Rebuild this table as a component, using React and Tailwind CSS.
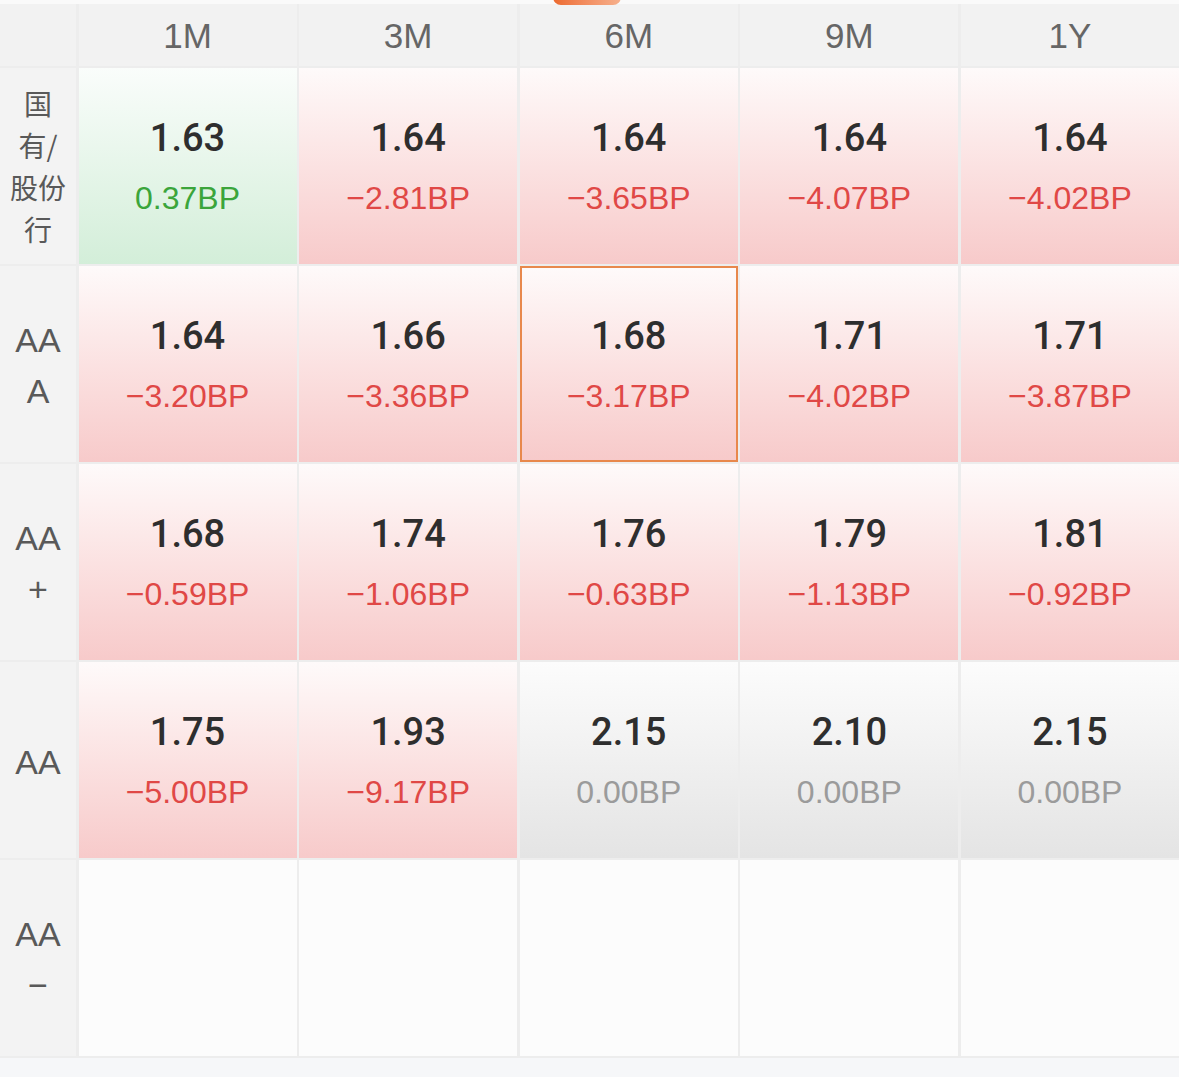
import React from 'react';

const tenors = ['1M', '3M', '6M', '9M', '1Y'];

const rows = [
  {
    label: ['国', '有/', '股份', '行'],
    cjk: true,
    cells: [
      { value: '1.63', change: '0.37BP', tone: 'up' },
      { value: '1.64', change: '−2.81BP', tone: 'down' },
      { value: '1.64', change: '−3.65BP', tone: 'down' },
      { value: '1.64', change: '−4.07BP', tone: 'down' },
      { value: '1.64', change: '−4.02BP', tone: 'down' },
    ],
  },
  {
    label: ['AA', 'A'],
    cells: [
      { value: '1.64', change: '−3.20BP', tone: 'down' },
      { value: '1.66', change: '−3.36BP', tone: 'down' },
      { value: '1.68', change: '−3.17BP', tone: 'down', selected: true },
      { value: '1.71', change: '−4.02BP', tone: 'down' },
      { value: '1.71', change: '−3.87BP', tone: 'down' },
    ],
  },
  {
    label: ['AA', '+'],
    cells: [
      { value: '1.68', change: '−0.59BP', tone: 'down' },
      { value: '1.74', change: '−1.06BP', tone: 'down' },
      { value: '1.76', change: '−0.63BP', tone: 'down' },
      { value: '1.79', change: '−1.13BP', tone: 'down' },
      { value: '1.81', change: '−0.92BP', tone: 'down' },
    ],
  },
  {
    label: ['AA'],
    cells: [
      { value: '1.75', change: '−5.00BP', tone: 'down' },
      { value: '1.93', change: '−9.17BP', tone: 'down' },
      { value: '2.15', change: '0.00BP', tone: 'flat' },
      { value: '2.10', change: '0.00BP', tone: 'flat' },
      { value: '2.15', change: '0.00BP', tone: 'flat' },
    ],
  },
  {
    label: ['AA', '−'],
    cells: [null, null, null, null, null],
  },
];

const toneBg = {
  up: 'bg-linear-to-b from-[#fafdfb] to-[#d3eed9]',
  down: 'bg-linear-to-b from-[#fefafa] to-[#f7caca]',
  flat: 'bg-linear-to-b from-[#fcfcfc] to-[#e4e4e4]',
};

const toneText = {
  up: 'text-[#3ba53b]',
  down: 'text-[#e04846]',
  flat: 'text-[#9b9b9b]',
};

const Cell = ({ cell }) => {
  if (!cell) return <div className="bg-[#fcfcfc]" />;
  return (
    <div
      className={`flex flex-col items-center justify-center pt-[4px] ${toneBg[cell.tone]} ${
        cell.selected ? 'border-[2.5px] border-[#e8884c]' : ''
      }`}
    >
      <div className="font-['Roboto','Liberation_Sans',sans-serif] font-medium text-[38px] leading-[60px] text-[#2e2e2e]">
        {cell.value}
      </div>
      <div className={`text-[32px] leading-[60px] ${toneText[cell.tone]}`}>{cell.change}</div>
    </div>
  );
};

export default function App() {
  return (
    <div className="relative w-[1179px] h-[1077px] overflow-hidden bg-[#f6f7f9] font-['Liberation_Sans','Noto_Sans_CJK_SC',sans-serif]">
      <div className="h-[4px] bg-[#fafafa]" />
      <div className="absolute left-[553px] -top-[6px] w-[68px] h-[11px] rounded-b-[8px] bg-linear-to-r from-[#ec6a2e] to-[#f6b08c]" />

      <div className="grid grid-cols-[76px_repeat(5,1fr)] grid-rows-[62px_repeat(5,196px)] gap-x-[2.5px] gap-y-[2px] bg-[#ededed] pb-[2px]">
        <div className="bg-[#f2f2f2]" />
        {tenors.map((t) => (
          <div key={t} className="flex items-center justify-center pt-[2px] bg-[#f2f2f2] text-[35px] text-[#666]">
            {t}
          </div>
        ))}

        {rows.map((row, i) => (
          <React.Fragment key={i}>
            <div
              className={`flex flex-col items-center justify-center bg-[#f3f3f3] text-[#595959] ${
                row.cjk
                  ? "font-['Noto_Sans_CJK_SC',sans-serif] text-[28px] leading-[42px]"
                  : 'text-[34px] leading-[51px] pt-[4px]'
              }`}
            >
              {row.label.map((l, j) => (
                <div key={j}>{l}</div>
              ))}
            </div>
            {row.cells.map((c, j) => (
              <Cell key={j} cell={c} />
            ))}
          </React.Fragment>
        ))}
      </div>
    </div>
  );
}
